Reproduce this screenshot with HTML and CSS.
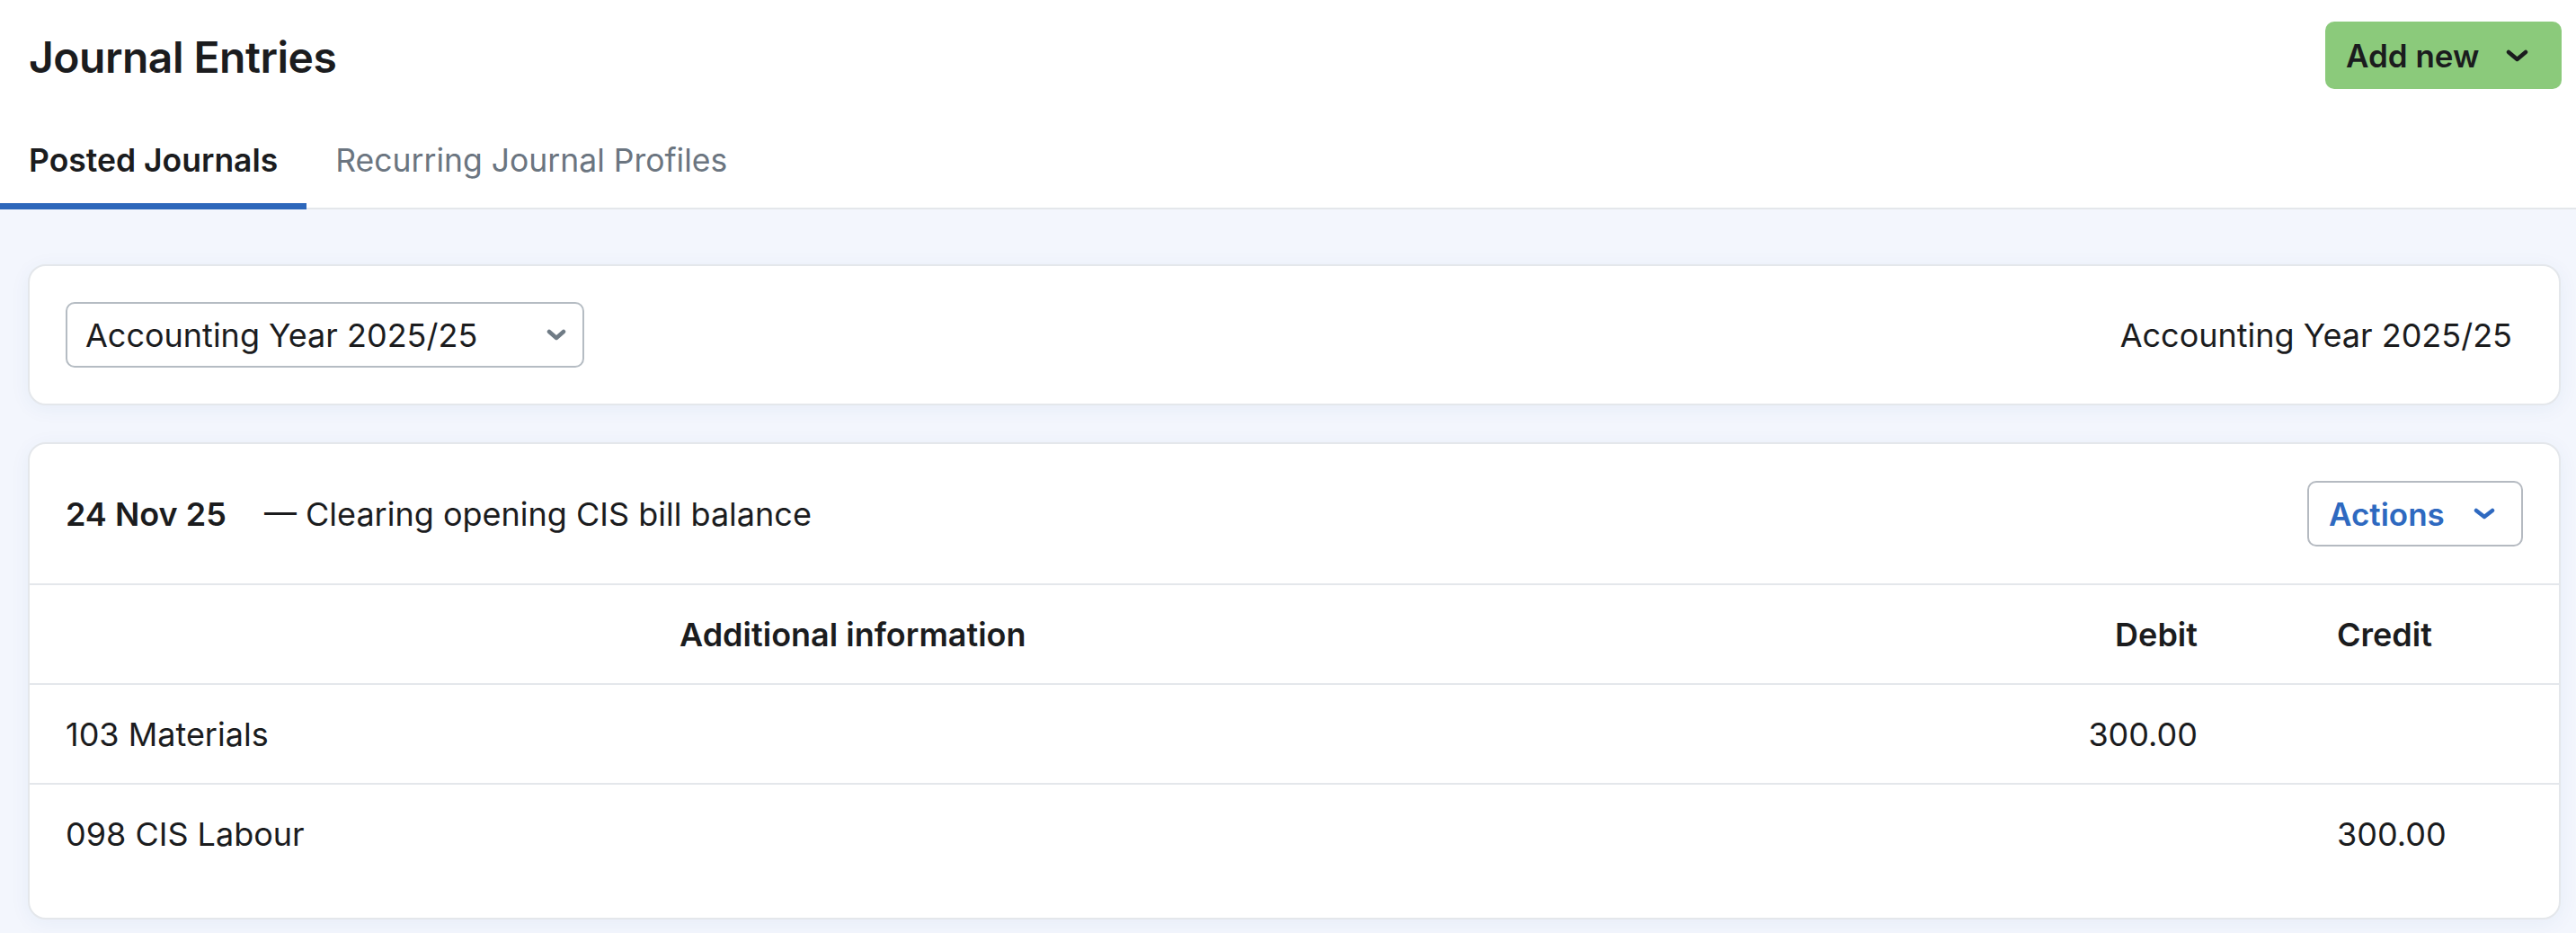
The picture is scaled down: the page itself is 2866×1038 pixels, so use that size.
FILE: index.html
```html
<!DOCTYPE html>
<html lang="en">
<head>
    <meta charset="UTF-8">
    <meta name="viewport" content="width=device-width, initial-scale=1.0">
    <title>Journal Entries</title>
    <link rel="stylesheet" href="styles.css">
</head>
<body>

    <header class="page-header">
        <div class="title-row">
            <h1>Journal Entries</h1>
            <button class="btn-add" type="button">
                Add new
                <svg class="chevron" width="25" height="14" viewBox="0 0 25 14"><polyline points="3,3 12.5,11 22,3" /></svg>
            </button>
        </div>

        <nav class="tabs">
            <a class="tab active" href="#">Posted Journals</a>
            <a class="tab" href="#">Recurring Journal Profiles</a>
        </nav>
    </header>

    <main class="content">
        <!-- filter -->
        <section class="card filter-card">
            <div class="select">
                <span>Accounting Year 2025/25</span>
                <svg class="chevron" width="22" height="13" viewBox="0 0 22 13"><polyline points="3,3 11,10 19,3" /></svg>
            </div>
            <div class="year-label">Accounting Year 2025/25</div>
        </section>

        <!-- journal -->
        <section class="card journal-card">
            <div class="journal-head">
                <div class="journal-title">
                    <span class="journal-date">24 Nov 25</span>
                    <span class="journal-desc">— Clearing opening CIS bill balance</span>
                </div>
                <button class="btn-actions" type="button">
                    Actions
                    <svg class="chevron" width="24" height="13" viewBox="0 0 24 13"><polyline points="3,3 12,10 21,3" /></svg>
                </button>
            </div>

            <div class="row row-head">
                <div></div>
                <div>Additional information</div>
                <div class="debit">Debit</div>
                <div class="credit">Credit</div>
            </div>
            <div class="row">
                <div>103 Materials</div>
                <div></div>
                <div class="debit">300.00</div>
                <div class="credit"></div>
            </div>
            <div class="row">
                <div>098 CIS Labour</div>
                <div></div>
                <div class="debit"></div>
                <div class="credit">300.00</div>
            </div>
        </section>
    </main>

</body>
</html>
```

FILE: styles.css
```css
body {
    font-family: Inter, Lato, "Liberation Sans", sans-serif;
    font-size: 36px;
    color: #1b1c1e;
    background-color: #f3f6fd;
    margin: 0;
    padding: 0;
    min-height: 100vh;
}

.page-header {
    background-color: white;
    border-bottom: 2px solid #e4e7eb;
}

.title-row {
    display: flex;
    justify-content: space-between;
    align-items: center;
    padding: 24px 16px 0 32px;
}

h1 {
    font-size: 48px;
    font-weight: 600;
    letter-spacing: -0.5px;
    margin: 0;
    padding-top: 4px;
    line-height: 60px;
}

.btn-add {
    display: flex;
    align-items: center;
    gap: 30px;
    height: 75px;
    width: 263px;
    padding: 0 0 0 23px;
    background-color: #8bca7b;
    color: #1b1c1e;
    border: none;
    border-radius: 10px;
    font-family: inherit;
    font-size: 35px;
    font-weight: 600;
    cursor: pointer;
}

.chevron polyline {
    fill: none;
    stroke: currentColor;
    stroke-width: 4.5;
    stroke-linecap: round;
    stroke-linejoin: round;
}

.tabs {
    display: flex;
    margin-top: 60px;
    margin-bottom: -2px;
}

.tab {
    display: block;
    padding: 0 32px 27px 32px;
    font-size: 35.5px;
    line-height: 40px;
    color: #6b7580;
    text-decoration: none;
    border-bottom: 7px solid transparent;
}

.tab.active {
    color: #1b1c1e;
    font-weight: 600;
    border-bottom-color: #2d67bb;
}

.content {
    padding: 61px 17px 40px 31px;
    display: flex;
    flex-direction: column;
    gap: 41px;
}

.card {
    background-color: white;
    border: 2px solid #e4e7eb;
    border-radius: 20px;
    box-shadow: 0 4px 22px rgba(40, 80, 160, 0.06);
}

.filter-card {
    display: flex;
    justify-content: space-between;
    align-items: center;
    padding: 40px 52px 40px 40px;
}

.select {
    display: flex;
    justify-content: space-between;
    align-items: center;
    box-sizing: border-box;
    width: 577px;
    height: 73px;
    padding: 0 18px 0 20px;
    border: 2px solid #b5bcc3;
    border-radius: 10px;
}

.select .chevron {
    color: #6f7b85;
}

.journal-head {
    display: flex;
    justify-content: space-between;
    align-items: center;
    padding: 41px 40px;
}

.journal-date {
    font-weight: 600;
    margin-right: 32px;
}

.btn-actions {
    display: flex;
    align-items: center;
    gap: 32px;
    box-sizing: border-box;
    width: 240px;
    height: 73px;
    padding: 0 0 0 22px;
    background-color: white;
    color: #2e69c0;
    border: 2px solid #b5bac1;
    border-radius: 10px;
    font-family: inherit;
    font-size: 35px;
    font-weight: 600;
    cursor: pointer;
}

.row {
    display: grid;
    grid-template-columns: 683px 1fr 200px 362px;
    align-items: center;
    height: 109px;
    padding: 0 40px;
    border-top: 2px solid #e4e7eb;
}

.row:last-child {
    margin-bottom: 39px;
}

.row-head {
    font-weight: 600;
}

.debit {
    text-align: right;
}

.credit {
    padding-left: 155px;
}
```
